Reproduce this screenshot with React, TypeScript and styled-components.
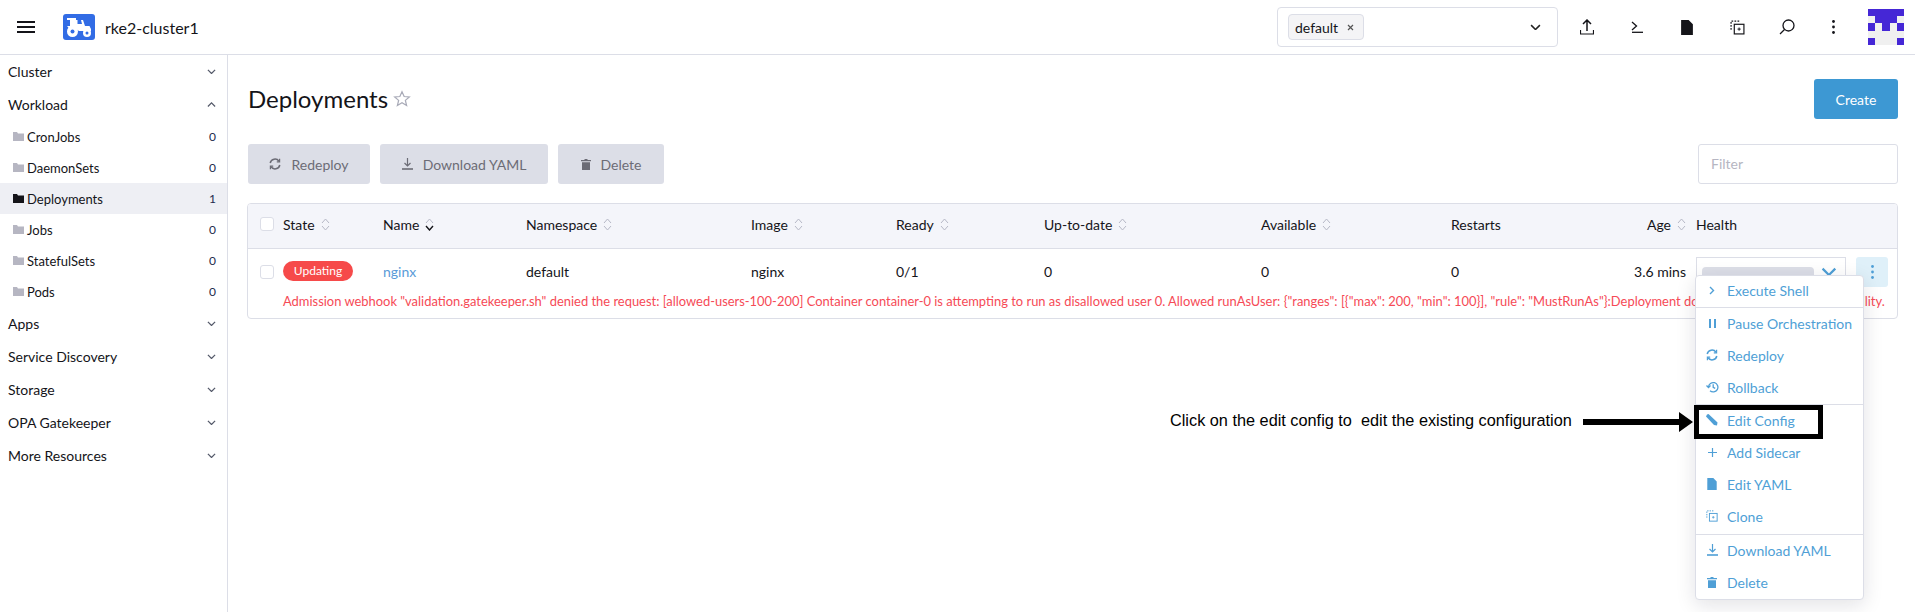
import React from 'react';
import styled, { createGlobalStyle } from 'styled-components';

const GlobalStyle = createGlobalStyle`
  html, body {
    margin: 0;
    padding: 0;
    background: #fff;
    font-family: Lato, "Liberation Sans", sans-serif;
    font-size: 14px;
    color: #141419;
  }
  * { box-sizing: border-box; }
`;

const Page = styled.div`
  position: relative;
  width: 1915px;
  height: 612px;
  overflow: hidden;
  display: flex;
  flex-direction: column;
`;

const Header = styled.header`
  height: 55px;
  flex: none;
  display: flex;
  align-items: center;
  border-bottom: 1px solid #dcdee7;
  padding: 0 11px 0 17px;
`;

const Burger = styled.div`
  width: 18px;
  height: 12px;
  margin-right: 28px;
  border-top: 2px solid #141419;
  border-bottom: 2px solid #141419;
  position: relative;
  &::after {
    content: '';
    position: absolute;
    left: 0;
    right: 0;
    top: 3px;
    height: 2px;
    background: #141419;
  }
`;

const ClusterName = styled.div`
  font-size: 16px;
  margin-left: 10px;
  flex: 1;
`;

const NsSelect = styled.div`
  width: 281px;
  height: 40px;
  border: 1px solid #dcdee7;
  border-radius: 4px;
  display: flex;
  align-items: center;
  justify-content: space-between;
  padding: 0 16px 0 10px;
  margin-right: 4px;
`;

const NsTag = styled.div`
  height: 26px;
  width: 76px;
  background: #f4f4f6;
  border: 1px solid #dcdee7;
  border-radius: 4px;
  display: flex;
  align-items: center;
  justify-content: space-between;
  padding: 0 9px 0 6px;
  font-size: 14px;
`;

const TopIcons = styled.div`
  display: flex;
  align-items: center;
`;

const TopIcon = styled.div<{ $w?: number }>`
  width: ${({ $w }) => $w ?? 50}px;
  height: 40px;
  display: flex;
  align-items: center;
  justify-content: center;
  color: #141419;
`;

const Avatar = styled.svg`
  display: block;
  margin-left: 14px;
`;

const Body = styled.div`
  flex: 1;
  display: flex;
  min-height: 0;
`;

const Sidebar = styled.nav`
  width: 228px;
  flex: none;
  border-right: 1px solid #dcdee7;
`;

const Group = styled.div`
  height: 33px;
  display: flex;
  align-items: center;
  justify-content: space-between;
  padding: 0 11px 0 8px;
  font-size: 14px;
`;

const Child = styled.div<{ $active?: boolean }>`
  height: 31px;
  display: flex;
  align-items: center;
  padding: 0 11px 0 13px;
  background: ${({ $active }) => ($active ? '#eeeff4' : 'transparent')};
  font-size: 13px;
  color: #141419;
`;

const ChildLabel = styled.span`
  margin-left: 3px;
  flex: 1;
`;

const Count = styled.span`
  font-size: 12px;
  color: #1d2a4d;
`;

const Main = styled.main`
  flex: 1;
  min-width: 0;
  padding: 24px 17px 0 19px;
`;

const TitleRow = styled.div`
  display: flex;
  align-items: center;
  height: 40px;
  margin-bottom: 25px;
`;

const Title = styled.h1`
  font-size: 24px;
  font-weight: 400;
  margin: 0 5px 0 1px;
  padding-bottom: 2px;
  flex: none;
`;

const CreateButton = styled.button`
  margin-left: auto;
  width: 84px;
  height: 40px;
  border: 0;
  border-radius: 3px;
  background: #3d98d3;
  color: #fff;
  font: inherit;
  font-size: 14px;
`;

const Toolbar = styled.div`
  display: flex;
  align-items: center;
  gap: 10px;
  margin-left: 1px;
  margin-bottom: 19px;
`;

const BulkButton = styled.button<{ $w: number }>`
  width: ${({ $w }) => $w}px;
  height: 40px;
  border: 0;
  border-radius: 3px;
  background: #dcdee7;
  color: #6c6c76;
  font: inherit;
  font-size: 14px;
  display: flex;
  align-items: center;
  justify-content: center;
  gap: 10px;
`;

const FilterInput = styled.div`
  margin-left: auto;
  width: 200px;
  height: 40px;
  border: 1px solid #dcdee7;
  border-radius: 3px;
  padding: 0 12px 2px;
  display: flex;
  align-items: center;
  color: #b6b6c2;
  font-size: 14px;
`;

const Table = styled.div`
  border: 1px solid #dcdee7;
  border-radius: 4px;
  height: 116px;
  overflow: hidden;
`;

const columns = '35px 100px 143px 225px 145px 148px 217px 190px 115px 120px 10px 150px';

const HeadRow = styled.div`
  display: grid;
  grid-template-columns: ${columns};
  height: 45px;
  padding-bottom: 4px;
  align-items: center;
  background: #f4f5fa;
  border-bottom: 1px solid #dcdee7;
  font-size: 14px;
`;

const DataRow = styled.div`
  display: grid;
  grid-template-columns: ${columns} 10px 32px;
  height: 48px;
  padding-bottom: 2px;
  align-items: center;
`;

const CheckCell = styled.div`
  padding-left: 12px;
  display: flex;
`;

const Check = styled.span`
  width: 14px;
  height: 14px;
  background: #fff;
  border: 1px solid #dcdee7;
  border-radius: 3px;
`;

const HeadCell = styled.div<{ $right?: boolean }>`
  display: flex;
  align-items: center;
  justify-content: ${({ $right }) => ($right ? 'flex-end' : 'flex-start')};
  gap: 6px;
`;

const Cell = styled.div<{ $right?: boolean }>`
  padding-bottom: 2px;
  text-align: ${({ $right }) => ($right ? 'right' : 'left')};
`;

const Badge = styled.span`
  display: inline-block;
  width: 70px;
  height: 20px;
  line-height: 20px;
  border-radius: 10px;
  background: #f64a4a;
  color: #fff;
  text-align: center;
  font-size: 12px;
`;

const NameLink = styled.span`
  color: #5a9bd8;
`;

const HealthBox = styled.div`
  height: 30px;
  border: 1px solid #dcdee7;
  display: flex;
  align-items: flex-start;
  padding: 9px 8px 0 5px;
  gap: 7px;
`;

const HealthBar = styled.div`
  width: 113px;
  height: 12px;
  background: #dcdee7;
  border-radius: 4px;
`;

const ActionButton = styled.div`
  height: 30px;
  background: #dff0f9;
  border-radius: 3px;
  display: flex;
  align-items: center;
  justify-content: center;
`;

const ErrorLine = styled.div`
  padding-left: 35px;
  white-space: nowrap;
  overflow: hidden;
  color: #f64a56;
  font-size: 12.93px;
  line-height: 18px;
  margin-top: -5px;
`;

const Menu = styled.div`
  position: absolute;
  left: 1695px;
  top: 275px;
  width: 169px;
  height: 325px;
  background: #fff;
  border: 1px solid #dcdee7;
  border-radius: 4px;
  box-shadow: 0 5px 20px rgba(20, 20, 40, 0.12);
  color: #4f9fd6;
  font-size: 14px;
`;

const MenuItem = styled.div<{ $h?: number }>`
  height: ${({ $h }) => $h ?? 32}px;
  padding-bottom: 2px;
  display: flex;
  align-items: center;
  padding-left: 8px;
`;

const MenuIcon = styled.span`
  width: 16px;
  height: 16px;
  display: flex;
  align-items: center;
  justify-content: center;
  margin-right: 7px;
`;

const MenuDivider = styled.div<{ $gap?: number }>`
  height: 1px;
  margin-top: ${({ $gap }) => $gap ?? 0}px;
  background: #dcdee7;
`;

const Callout = styled.div`
  position: absolute;
  left: 1694px;
  top: 405px;
  width: 129px;
  height: 34px;
  border: 5px solid #000;
`;

const NoteRow = styled.div`
  position: absolute;
  left: 1170px;
  top: 410px;
  height: 24px;
  display: flex;
  align-items: center;
  gap: 11px;
  font-family: 'Liberation Sans', Arial, sans-serif;
  font-size: 16.3px;
  color: #000;
`;

const NoteText = styled.span`
  white-space: pre;
  padding-bottom: 4px;
`;

const ChevronDown = ({ size = 9, color = '#555a6a' }: { size?: number; color?: string }) => (
  <svg width={size} height={size * 0.6} viewBox="0 0 10 6" fill="none" stroke={color} strokeWidth="1.4">
    <path d="M1 1l4 4 4-4" />
  </svg>
);

const ChevronUp = () => (
  <svg width={9} height={5.4} viewBox="0 0 10 6" fill="none" stroke="#555a6a" strokeWidth="1.4">
    <path d="M1 5l4-4 4 4" />
  </svg>
);

const Folder = ({ color }: { color: string }) => (
  <svg width="11" height="9" viewBox="0 0 11 9" fill={color}>
    <path d="M0 0h4l1 1.4h6V9H0z" />
  </svg>
);

const Sort = ({ active }: { active?: boolean }) => (
  <svg width="9" height="13" viewBox="0 0 9 13" fill="none" stroke="#b6b8c6" strokeWidth="1">
    <path d="M1 5l3.5-4L8 5" />
    <path d="M1 8l3.5 4L8 8" stroke={active ? '#141419' : '#b6b8c6'} strokeWidth={active ? 1.4 : 1} />
  </svg>
);

const Star = () => (
  <svg width="18" height="18" viewBox="0 0 16 16" fill="none" stroke="#a9abb8" strokeWidth="1.1">
    <path d="M8 1.5l1.9 4.3 4.6.4-3.5 3 1.1 4.6L8 11.4l-4.1 2.4L5 9.2l-3.5-3 4.6-.4z" />
  </svg>
);

const Refresh = ({ color }: { color: string }) => (
  <svg width="12" height="12" viewBox="0 0 12 12" fill="none" stroke={color} strokeWidth="1.5">
    <path d="M1.2 5A4.9 4.9 0 0 1 10 3.2M10.8 7A4.9 4.9 0 0 1 2 8.8" />
    <path d="M10.6 0.8v3H7.8M1.4 11.2v-3h2.8" strokeWidth="1.2" />
  </svg>
);

const Download = ({ color }: { color: string }) => (
  <svg width="11" height="12" viewBox="0 0 11 12" fill="none" stroke={color} strokeWidth="1.2">
    <path d="M5.5 0v7.5M2.5 5l3 3 3-3" />
    <path d="M0 11h11" strokeWidth="1.6" />
  </svg>
);

const Trash = ({ color }: { color: string }) => (
  <svg width="10" height="11" viewBox="0 0 10 11" fill={color}>
    <path d="M3.5 0h3v1H10v1.2H0V1h3.5zM1 3.2h8V11H1z" />
  </svg>
);

const FileIcon = ({ w, h, color }: { w: number; h: number; color: string }) => (
  <svg width={w} height={h} viewBox="0 0 11 14" fill={color}>
    <path d="M0 0h7l4 4v10H0z" />
  </svg>
);

const CloneIcon = ({ size, color }: { size: number; color: string }) => (
  <svg width={size} height={size} viewBox="0 0 14 14" fill="none" stroke={color} strokeWidth="1.1">
    <path d="M1 9V1h8" strokeDasharray="1.6 1.2" />
    <rect x="4" y="4" width="9" height="9" />
    <path d="M7 8.5h3M8.5 7v3" strokeWidth="0.9" />
  </svg>
);

const Dots = ({ color }: { color: string }) => (
  <svg width="3" height="14" viewBox="0 0 3 14" fill={color}>
    <circle cx="1.5" cy="1.5" r="1.4" />
    <circle cx="1.5" cy="7" r="1.4" />
    <circle cx="1.5" cy="12.5" r="1.4" />
  </svg>
);

const Logo = () => (
  <svg width="32" height="26" viewBox="0 0 32 26">
    <rect width="32" height="26" rx="3" fill="#326ce5" />
    <g fill="#fff">
      <path d="M4 4h9v2h7l2 6h4.500l1.500 3v2H16l-3-2H6.500L4 12h3V6H4z" />
      <circle cx="9.500" cy="17.500" r="5.500" />
      <circle cx="24" cy="19" r="4" />
    </g>
    <circle cx="9.500" cy="17.500" r="2" fill="#326ce5" />
    <circle cx="24" cy="19" r="1.500" fill="#326ce5" />
    <path d="M14.500 6h3.500l1 4h-4.500z" fill="#326ce5" />
  </svg>
);

// identicon: 5x5 pixel pattern, mirrored like the real avatar
const avatarCells = ['11111', '01110', '10101', '00000', '10001'];

const AvatarIcon = () => (
  <Avatar width="36" height="36" viewBox="0 0 5 5" shapeRendering="crispEdges">
    <rect width="5" height="5" fill="#f0f0f0" />
    {avatarCells.map((row, y) =>
      row.split('').map((c, x) => (c === '1' ? <rect key={`${x}-${y}`} x={x} y={y} width="1" height="1" fill="#4527d6" /> : null)),
    )}
  </Avatar>
);

const headers: { label: string; sort?: boolean; active?: boolean; right?: boolean }[] = [
  { label: 'State', sort: true },
  { label: 'Name', sort: true, active: true },
  { label: 'Namespace', sort: true },
  { label: 'Image', sort: true },
  { label: 'Ready', sort: true },
  { label: 'Up-to-date', sort: true },
  { label: 'Available', sort: true },
  { label: 'Restarts' },
  { label: 'Age', sort: true, right: true },
];

const workloads = [
  { name: 'CronJobs', count: 0 },
  { name: 'DaemonSets', count: 0 },
  { name: 'Deployments', count: 1, active: true },
  { name: 'Jobs', count: 0 },
  { name: 'StatefulSets', count: 0 },
  { name: 'Pods', count: 0 },
];

const menuColor = '#4f9fd6';

function App() {
  return (
    <Page>
      <GlobalStyle />
      <Header>
        <Burger />
        <Logo />
        <ClusterName>rke2-cluster1</ClusterName>
        <NsSelect>
          <NsTag>
            default
            <svg width="7" height="7" viewBox="0 0 7 7" stroke="#555" strokeWidth="1.2">
              <path d="M1 1l5 5M6 1l-5 5" />
            </svg>
          </NsTag>
          <ChevronDown size={11} color="#222" />
        </NsSelect>
        <TopIcons>
          <TopIcon>
            <svg width="14" height="16" viewBox="0 0 14 16" fill="none" stroke="#141419" strokeWidth="1.5">
              <path d="M7 12V1.500M3 5l4-4 4 4" />
              <path d="M0.500 11v4h13v-4" strokeWidth="1.200" />
            </svg>
          </TopIcon>
          <TopIcon>
            <svg width="12" height="12" viewBox="0 0 12 12" fill="none" stroke="#141419" strokeWidth="1.3">
              <path d="M1 1l4.500 4L1 9" />
              <path d="M1 11.300h11" />
            </svg>
          </TopIcon>
          <TopIcon>
            <FileIcon w={12} h={15} color="#141419" />
          </TopIcon>
          <TopIcon>
            <CloneIcon size={15} color="#141419" />
          </TopIcon>
          <TopIcon>
            <svg width="16" height="16" viewBox="0 0 16 16" fill="none" stroke="#141419" strokeWidth="1.3">
              <circle cx="9.500" cy="6.500" r="5.500" />
              <path d="M5.500 10.500L1 15" />
            </svg>
          </TopIcon>
          <TopIcon $w={42}>
            <Dots color="#141419" />
          </TopIcon>
        </TopIcons>
        <AvatarIcon />
      </Header>
      <Body>
        <Sidebar>
          <Group>
            Cluster
            <ChevronDown />
          </Group>
          <Group>
            Workload
            <ChevronUp />
          </Group>
          {workloads.map((w) => (
            <Child key={w.name} $active={w.active}>
              <Folder color={w.active ? '#141419' : '#b6b6c2'} />
              <ChildLabel>{w.name}</ChildLabel>
              <Count>{w.count}</Count>
            </Child>
          ))}
          {['Apps', 'Service Discovery', 'Storage', 'OPA Gatekeeper', 'More Resources'].map((g) => (
            <Group key={g}>
              {g}
              <ChevronDown />
            </Group>
          ))}
        </Sidebar>
        <Main>
          <TitleRow>
            <Title>Deployments</Title>
            <Star />
            <CreateButton>Create</CreateButton>
          </TitleRow>
          <Toolbar>
            <BulkButton $w={122}>
              <Refresh color="#6c6c76" />
              Redeploy
            </BulkButton>
            <BulkButton $w={168}>
              <Download color="#6c6c76" />
              Download YAML
            </BulkButton>
            <BulkButton $w={106}>
              <Trash color="#6c6c76" />
              Delete
            </BulkButton>
            <FilterInput>Filter</FilterInput>
          </Toolbar>
          <Table>
            <HeadRow>
              <CheckCell>
                <Check />
              </CheckCell>
              {headers.map((h) => (
                <HeadCell key={h.label} $right={h.right}>
                  {h.label}
                  {h.sort && <Sort active={h.active} />}
                </HeadCell>
              ))}
              <span />
              <HeadCell>Health</HeadCell>
            </HeadRow>
            <DataRow>
              <CheckCell>
                <Check />
              </CheckCell>
              <Cell>
                <Badge>Updating</Badge>
              </Cell>
              <Cell>
                <NameLink>nginx</NameLink>
              </Cell>
              <Cell>default</Cell>
              <Cell>nginx</Cell>
              <Cell>0/1</Cell>
              <Cell>0</Cell>
              <Cell>0</Cell>
              <Cell>0</Cell>
              <Cell $right>3.6 mins</Cell>
              <span />
              <HealthBox>
                <HealthBar />
                <ChevronDown size={16} color={menuColor} />
              </HealthBox>
              <span />
              <ActionButton>
                <Dots color={menuColor} />
              </ActionButton>
            </DataRow>
            <ErrorLine>
              Admission webhook "validation.gatekeeper.sh" denied the request: [allowed-users-100-200] Container container-0 is attempting to run as disallowed user 0. Allowed runAsUser: {'{"ranges": [{"max": 200, "min": 100}], "rule": "MustRunAs"}'}:Deployment does not have minimum availability.
            </ErrorLine>
          </Table>
        </Main>
      </Body>
      <Menu>
        <MenuItem $h={31}>
          <MenuIcon>
            <svg width="6" height="9" viewBox="0 0 6 9" fill="none" stroke={menuColor} strokeWidth="1.4">
              <path d="M1 1l3.500 3.500L1 8" />
            </svg>
          </MenuIcon>
          Execute Shell
        </MenuItem>
        <MenuDivider />
        <MenuItem>
          <MenuIcon>
            <svg width="7" height="9" viewBox="0 0 7 9" fill={menuColor}>
              <path d="M0 0h2v9H0zM5 0h2v9H5z" />
            </svg>
          </MenuIcon>
          Pause Orchestration
        </MenuItem>
        <MenuItem>
          <MenuIcon>
            <Refresh color={menuColor} />
          </MenuIcon>
          Redeploy
        </MenuItem>
        <MenuItem>
          <MenuIcon>
            <svg width="13" height="12" viewBox="0 0 13 12" fill="none" stroke={menuColor} strokeWidth="1.3">
              <path d="M2.500 6a4.700 4.700 0 1 1 1.500 3.700" />
              <path d="M0.500 4.500l2 2 2-2" />
              <path d="M7.200 3.300V6.300l2 1" />
            </svg>
          </MenuIcon>
          Rollback
        </MenuItem>
        <MenuDivider />
        <MenuItem>
          <MenuIcon>
            <svg width="12" height="12" viewBox="0 0 12 12" fill={menuColor}>
              <path d="M1 0.500l1.500-.5L11.500 8.500 11 11.500 8 11 0 2.500z" />
            </svg>
          </MenuIcon>
          Edit Config
        </MenuItem>
        <MenuItem>
          <MenuIcon>
            <svg width="9" height="9" viewBox="0 0 9 9" stroke={menuColor} strokeWidth="1.2">
              <path d="M4.500 0v9M0 4.500h9" />
            </svg>
          </MenuIcon>
          Add Sidecar
        </MenuItem>
        <MenuItem>
          <MenuIcon>
            <FileIcon w={10} h={12} color={menuColor} />
          </MenuIcon>
          Edit YAML
        </MenuItem>
        <MenuItem>
          <MenuIcon>
            <CloneIcon size={12} color={menuColor} />
          </MenuIcon>
          Clone
        </MenuItem>
        <MenuDivider $gap={1} />
        <MenuItem>
          <MenuIcon>
            <Download color={menuColor} />
          </MenuIcon>
          Download YAML
        </MenuItem>
        <MenuItem>
          <MenuIcon>
            <Trash color={menuColor} />
          </MenuIcon>
          Delete
        </MenuItem>
      </Menu>
      <Callout />
      <NoteRow>
        <NoteText>{'Click on the edit config to  edit the existing configuration'}</NoteText>
        <svg width="110" height="20" viewBox="0 0 110 20">
          <path d="M0 7h96V0l14 10-14 10v-7H0z" fill="#000" />
        </svg>
      </NoteRow>
    </Page>
  );
}

export default App;
